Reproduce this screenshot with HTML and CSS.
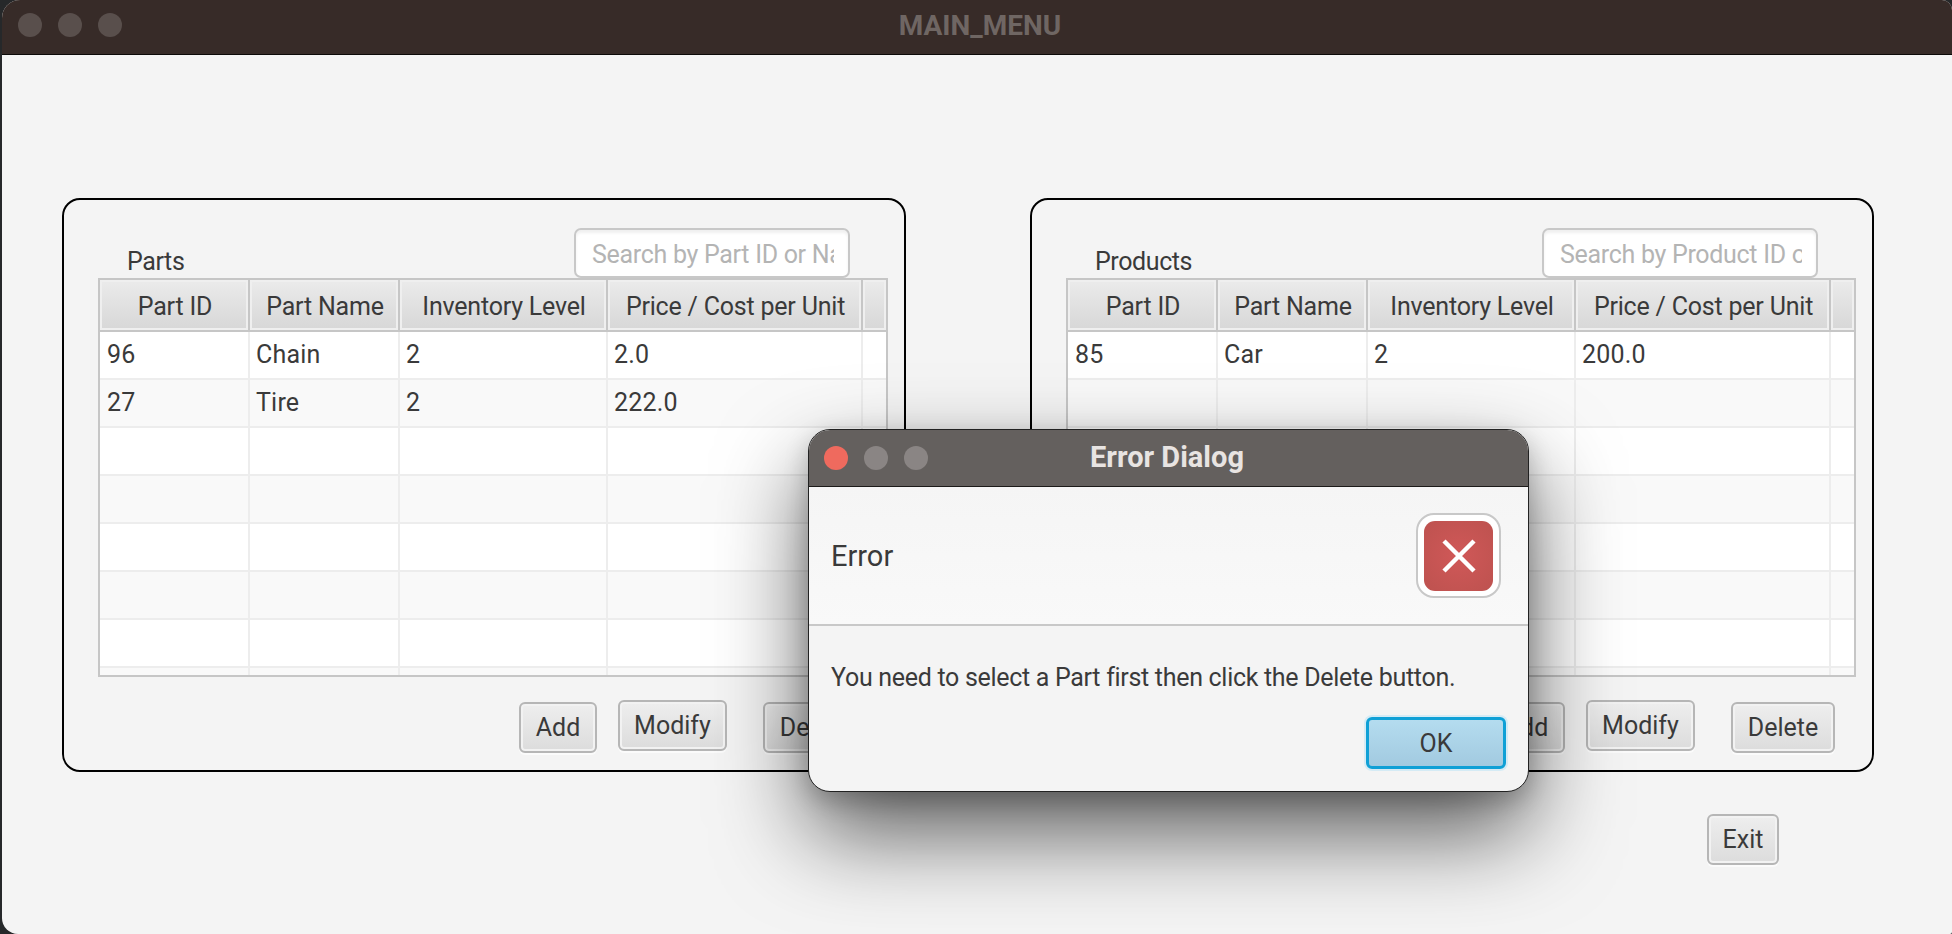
FILE: index.html
```html
<!DOCTYPE html>
<html lang="en">
<head>
    <meta charset="UTF-8">
    <meta name="viewport" content="width=device-width, initial-scale=1.0">
    <title>MAIN_MENU</title>
    <link rel="stylesheet" href="styles.css">
</head>
<body>
    <div class="window">
        <header class="titlebar">
            <div class="dots">
                <span class="dot"></span>
                <span class="dot"></span>
                <span class="dot"></span>
            </div>
            <h1 class="window-title">MAIN_MENU</h1>
        </header>

        <main class="content">
            <div class="panels">
                <section class="panel">
                    <div class="panel-top">
                        <label class="panel-label" for="partSearch">Parts</label>
                        <input class="search" id="partSearch" type="text" placeholder="Search by Part ID or Name">
                    </div>
                    <div class="table-wrap">
                        <table class="data-table">
                            <thead>
                                <tr>
                                    <th class="col-id">Part ID</th>
                                    <th class="col-name">Part Name</th>
                                    <th class="col-level">Inventory Level</th>
                                    <th class="col-price">Price / Cost per Unit</th>
                                    <th class="col-rest"></th>
                                </tr>
                            </thead>
                            <tbody>
                                <tr><td>96</td><td>Chain</td><td>2</td><td>2.0</td><td></td></tr>
                                <tr><td>27</td><td>Tire</td><td>2</td><td>222.0</td><td></td></tr>
                                <tr><td></td><td></td><td></td><td></td><td></td></tr>
                                <tr><td></td><td></td><td></td><td></td><td></td></tr>
                                <tr><td></td><td></td><td></td><td></td><td></td></tr>
                                <tr><td></td><td></td><td></td><td></td><td></td></tr>
                                <tr><td></td><td></td><td></td><td></td><td></td></tr>
                                <tr><td></td><td></td><td></td><td></td><td></td></tr>
                            </tbody>
                        </table>
                    </div>
                    <div class="panel-actions">
                        <button class="btn btn-add" type="button">Add</button>
                        <button class="btn btn-modify" type="button">Modify</button>
                        <button class="btn btn-delete" type="button">Delete</button>
                    </div>
                </section>

                <section class="panel">
                    <div class="panel-top">
                        <label class="panel-label" for="productSearch">Products</label>
                        <input class="search" id="productSearch" type="text" placeholder="Search by Product ID or Name">
                    </div>
                    <div class="table-wrap">
                        <table class="data-table">
                            <thead>
                                <tr>
                                    <th class="col-id">Part ID</th>
                                    <th class="col-name">Part Name</th>
                                    <th class="col-level">Inventory Level</th>
                                    <th class="col-price">Price / Cost per Unit</th>
                                    <th class="col-rest"></th>
                                </tr>
                            </thead>
                            <tbody>
                                <tr><td>85</td><td>Car</td><td>2</td><td>200.0</td><td></td></tr>
                                <tr><td></td><td></td><td></td><td></td><td></td></tr>
                                <tr><td></td><td></td><td></td><td></td><td></td></tr>
                                <tr><td></td><td></td><td></td><td></td><td></td></tr>
                                <tr><td></td><td></td><td></td><td></td><td></td></tr>
                                <tr><td></td><td></td><td></td><td></td><td></td></tr>
                                <tr><td></td><td></td><td></td><td></td><td></td></tr>
                                <tr><td></td><td></td><td></td><td></td><td></td></tr>
                            </tbody>
                        </table>
                    </div>
                    <div class="panel-actions">
                        <button class="btn btn-add" type="button">Add</button>
                        <button class="btn btn-modify" type="button">Modify</button>
                        <button class="btn btn-delete" type="button">Delete</button>
                    </div>
                </section>
            </div>

            <button class="btn btn-exit" type="button">Exit</button>
        </main>
    </div>

    <div class="dialog">
        <div class="dialog-titlebar">
            <div class="dots">
                <span class="dot dot-close"></span>
                <span class="dot dot-idle"></span>
                <span class="dot dot-idle"></span>
            </div>
            <h2 class="dialog-title">Error Dialog</h2>
        </div>
        <div class="dialog-header">
            <span class="dialog-heading">Error</span>
            <div class="error-icon">
                <div class="error-icon-inner">
                    <svg width="36" height="36" viewBox="0 0 36 36">
                        <path d="M3 3 L33 33 M33 3 L3 33" stroke="#fff" stroke-width="4.5" fill="none"/>
                    </svg>
                </div>
            </div>
        </div>
        <div class="dialog-body">
            <p class="dialog-message">You need to select a Part first then click the Delete button.</p>
            <button class="btn btn-ok" type="button">OK</button>
        </div>
    </div>
</body>
</html>
```

FILE: styles.css
```css
* {
    box-sizing: border-box;
}

body {
    margin: 0;
    width: 1952px;
    height: 934px;
    overflow: hidden;
    background-color: #26282a;
    font-family: Roboto, "Liberation Sans", sans-serif;
    font-size: 25px;
    color: #3a3a3a;
}

.window {
    margin-left: 2px;
    height: 934px;
    background-color: #f4f4f4;
    border-radius: 18px 10px 2px 16px;
    overflow: hidden;
}

.titlebar {
    display: grid;
    grid-template-columns: 1fr auto 1fr;
    align-items: center;
    height: 55px;
    padding: 0 10px 4px 16px;
    background-color: #372b28;
    border-bottom: 1px solid #0c0a09;
}

.dots {
    display: flex;
    gap: 16px;
}

.dot {
    width: 24px;
    height: 24px;
    border-radius: 50%;
    background-color: #594f4c;
}

.window-title {
    margin: 0;
    font-size: 28px;
    font-weight: 700;
    color: #6f6663;
}

.content {
    display: flex;
    flex-direction: column;
    padding: 143px 0 0 60px;
}

.panels {
    display: flex;
    gap: 124px;
}

.panel {
    width: 844px;
    height: 574px;
    padding: 28px 0 0 34px;
    border: 2px solid #000;
    border-radius: 18px;
}

.panel-top {
    display: flex;
    justify-content: space-between;
    height: 50px;
    width: 752px;
}

.panel-label {
    margin: 19px 0 0 29px;
    line-height: 30px;
    letter-spacing: -0.4px;
}

.search {
    width: 276px;
    height: 50px;
    padding: 2px 14px 0 16px;
    border: 2px solid #c8c8c8;
    border-radius: 7px;
    background-color: #fff;
    box-shadow: inset 0 3px 3px #f0f0f0;
    font: inherit;
    letter-spacing: -0.3px;
    color: #3a3a3a;
}

.search::placeholder {
    color: #b4b4b4;
    opacity: 1;
}

.table-wrap {
    width: 790px;
    height: 399px;
    border: 2px solid #c6c6c6;
    background-color: #f4f4f4;
    overflow: hidden;
}

.data-table {
    width: 786px;
    table-layout: fixed;
    border-collapse: separate;
    border-spacing: 0;
}

.col-id, .col-name {
    width: 150px;
}

.col-level {
    width: 208px;
}

.col-price {
    width: 255px;
}

.col-rest {
    width: 23px;
}

.data-table th {
    height: 52px;
    padding: 2px 0 0 2px;
    font-weight: 400;
    letter-spacing: -0.2px;
    background: linear-gradient(#ebebeb, #d7d7d7);
    border-right: 2px solid #c6c6c6;
    border-bottom: 2px solid #c6c6c6;
    box-shadow: inset 0 0 0 2px #efefef;
}

.data-table th:last-child {
    border-right: none;
}

.data-table td {
    height: 48px;
    padding: 0 0 2px 6px;
    letter-spacing: 0.2px;
    border-right: 2px solid #ededed;
    border-bottom: 2px solid #ededed;
    background-color: #fff;
}

.data-table td:first-child {
    padding-left: 7px;
}

.data-table td:last-child {
    border-right: none;
}

.data-table tbody tr:nth-child(even) td {
    background-color: #f9f9f9;
}

.panel-actions {
    display: flex;
    align-items: flex-start;
    justify-content: flex-end;
    width: 769px;
    margin-top: 25px;
}

.btn {
    height: 51px;
    padding: 0;
    border: 2px solid #b6b6b6;
    border-radius: 6px;
    background: linear-gradient(#eeeeee, #dcdcdc);
    box-shadow: inset 0 0 0 2px #f2f2f2, 0 2px 0 #fbfbfb;
    font: inherit;
    color: #3a3a3a;
}

.btn-add {
    width: 78px;
}

.btn-modify {
    width: 109px;
    margin: -2px 36px 0 21px;
}

.btn-delete {
    width: 104px;
}

.btn-exit {
    align-self: flex-end;
    width: 72px;
    height: 51px;
    margin: 42px 173px 0 0;
}

/* dialog lies over the main window */
.dialog {
    position: absolute;
    left: 808px;
    top: 429px;
    width: 721px;
    height: 363px;
    border: 1px solid #222;
    border-radius: 22px;
    background-color: #f4f4f4;
    box-shadow: 0 42px 90px rgba(0, 0, 0, 0.62), 0 8px 24px rgba(0, 0, 0, 0.2);
    overflow: hidden;
}

.dialog-titlebar {
    display: grid;
    grid-template-columns: 1fr auto 1fr;
    align-items: center;
    height: 57px;
    padding: 0 18px 1px 15px;
    background-color: #64605e;
    border-bottom: 1px solid #1c1a19;
}

.dot-close {
    background-color: #ef6a5e;
}

.dot-idle {
    background-color: #8a8584;
}

.dialog-title {
    margin: 0 0 2px;
    font-size: 29px;
    font-weight: 700;
    color: #e8e4e2;
}

.dialog-header {
    display: flex;
    align-items: center;
    justify-content: space-between;
    height: 139px;
    padding: 0 27px 0 22px;
    background: linear-gradient(#f5f5f5, #f9f9f9);
    border-bottom: 2px solid #c8c8c8;
}

.dialog-heading {
    font-size: 29px;
}

.error-icon {
    display: flex;
    align-items: center;
    justify-content: center;
    width: 85px;
    height: 85px;
    border: 2px solid #c8c8c8;
    border-radius: 18px;
    background-color: #fff;
}

.error-icon-inner {
    display: flex;
    align-items: center;
    justify-content: center;
    width: 69px;
    height: 70px;
    border-radius: 11px;
    background: radial-gradient(circle, #d05858, #bd524f);
}

.dialog-body {
    display: flex;
    flex-direction: column;
    padding: 37px 22px 0 22px;
}

.dialog-message {
    margin: 0;
    line-height: 30px;
    letter-spacing: -0.3px;
}

.btn-ok {
    align-self: flex-end;
    width: 140px;
    height: 52px;
    margin-top: 24px;
    border: 3px solid #0fa0d6;
    background: linear-gradient(#b4dcef, #a2cae0);
    box-shadow: 0 0 0 2px #d5ebf5;
}
```
